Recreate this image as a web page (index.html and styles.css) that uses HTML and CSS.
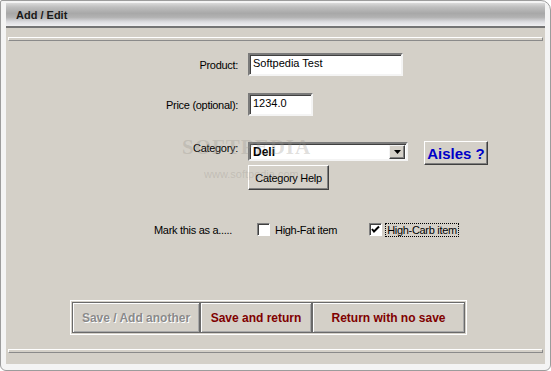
FILE: index.html
```html
<!DOCTYPE html>
<html lang="en">
<head>
  <meta charset="UTF-8">
  <title>Add / Edit</title>
  <link rel="stylesheet" href="styles.css">
</head>
<body>
  <div class="window">
    <div class="titlebar">Add / Edit</div>
    <div class="panel">
      <div class="groove"></div>

      <!-- Product name -->
      <div class="row row-product">
        <div class="lbl">Product:</div>
        <div class="field field-product">Softpedia Test</div>
      </div>

      <!-- Price -->
      <div class="row row-price">
        <div class="lbl">Price (optional):</div>
        <div class="field field-price">1234.0</div>
      </div>

      <!-- Category -->
      <div class="row row-category">
        <div class="lbl lbl-top">Category:</div>
        <div class="category-col">
          <div class="select">
            <span class="select-value">Deli</span>
            <span class="select-arrow">
              <svg width="7" height="4" viewBox="0 0 7 4"><polygon points="0,0 7,0 3.5,4" fill="#000"/></svg>
            </span>
          </div>
          <button type="button" class="btn btn-help">Category Help</button>
        </div>
        <button type="button" class="btn btn-aisles">Aisles ?</button>
      </div>

      <!-- Flags -->
      <div class="row row-mark">
        <div class="lbl lbl-mark">Mark this as a.....</div>
        <div class="check check-fat">
          <span class="box"></span>
          <span class="check-text">High-Fat item</span>
        </div>
        <div class="check check-carb">
          <span class="box">
            <svg width="9" height="9" viewBox="0 0 9 9"><polyline points="1,4 3,6.5 8,1.5" fill="none" stroke="#000" stroke-width="2"/></svg>
          </span>
          <span class="check-text focus">High-Carb item</span>
        </div>
      </div>

      <div class="btn-group">
        <button type="button" class="cmd cmd-add" disabled>Save / Add another</button>
        <button type="button" class="cmd cmd-save">Save and return</button>
        <button type="button" class="cmd cmd-return">Return with no save</button>
      </div>

      <div class="groove groove-bottom"></div>

      <!-- screenshot watermark -->
      <div class="watermark">
        <span class="wm-big">SOFTPEDIA</span>
        <span class="wm-small">www.softpedia.com</span>
      </div>
    </div>
  </div>
</body>
</html>
```

FILE: styles.css
```css
*, *::before, *::after {
  box-sizing: border-box;
}
body {
  margin: 0;
  background: #fff;
  font-family: "Liberation Sans", Arial, sans-serif;
  font-size: 11px;
  color: #000;
}
.window {
  width: 551px;
  height: 371px;
  border: 1px solid #9c9c9c;
  border-radius: 2px 10px 6px 6px;
  background: #f4f4f4;
  padding: 2px 5px 4px 5px;
  display: flex;
  flex-direction: column;
}
.titlebar {
  height: 25px;
  padding-left: 10px;
  line-height: 24px;
  font-weight: bold;
  color: #1a1a1a;
  border-bottom: 2px solid #747474;
  background: linear-gradient(#dadada 0%, #bebebe 18%, #a8a8a8 45%, #b2b2b2 62%, #dcdce0 82%, #f0f0f2 100%);
}
.panel {
  position: relative;
  height: 336px;
  background: #d4d0c8;
  overflow: hidden;
}
/* Etched separator lines */
.groove {
  height: 4px;
  margin: 9px 2px 0 2px;
  border: 1px solid;
  border-color: #fff #8a8a8a #8a8a8a #fff;
}
.groove-bottom {
  margin-top: 14px;
}
.row {
  display: flex;
  align-items: center;
}
.lbl {
  width: 242px;
  padding-right: 10px;
  text-align: right;
  letter-spacing: -0.3px;
}
.lbl-top {
  align-self: flex-start;
  line-height: 13px;
}
.lbl-mark {
  padding-right: 16px;
}
/* Sunken edit boxes */
.field {
  height: 23px;
  padding: 1px 3px 3px;
  background: #fff;
  border: 2px solid;
  border-color: #7a7a7a #f4f4f4 #f4f4f4 #7a7a7a;
  box-shadow: inset 1px 1px #404040;
  font-size: 11px;
  line-height: 15px;
}
.row-product {
  margin-top: 12px;
}
.field-product {
  width: 155px;
}
.row-price {
  margin-top: 17px;
}
.field-price {
  width: 65px;
}
.row-category {
  margin-top: 26px;
  align-items: flex-start;
}
.category-col {
  display: flex;
  flex-direction: column;
  align-items: flex-start;
}
.select {
  width: 160px;
  height: 19px;
  display: flex;
  align-items: center;
  justify-content: space-between;
  background: #fff;
  border: 2px solid;
  border-color: #7a7a7a #f4f4f4 #f4f4f4 #7a7a7a;
  box-shadow: inset 1px 1px #404040;
  padding: 0 1px 0 3px;
}
.select-value {
  font-weight: bold;
  font-size: 12px;
}
.select-arrow {
  width: 16px;
  height: 14px;
  display: flex;
  align-items: center;
  justify-content: center;
  background: #d4d0c8;
  border: 1px solid;
  border-color: #f4f4f4 #404040 #404040 #f4f4f4;
  box-shadow: inset -1px -1px #808080;
}
.btn {
  font-family: "Liberation Sans", Arial, sans-serif;
  background: #d4d0c8;
  border: 1px solid;
  border-color: #fff #404040 #404040 #fff;
  box-shadow: inset -1px -1px #808080;
  padding: 0;
  color: #000;
}
.btn-help {
  margin-top: 4px;
  width: 81px;
  height: 25px;
  font-size: 11px;
  letter-spacing: -0.3px;
}
.btn-aisles {
  margin: -1px 0 0 16px;
  width: 64px;
  height: 24px;
  font-size: 15px;
  font-weight: bold;
  color: #0000c8;
}
.row-mark {
  margin-top: 33px;
  height: 13px;
}
.check {
  display: flex;
  align-items: center;
}
.check-fat {
  margin-left: 9px;
}
.check-carb {
  margin-left: 31px;
}
.box {
  width: 13px;
  height: 13px;
  background: #fff;
  border: 1px solid;
  border-color: #808080 #fff #fff #808080;
  box-shadow: inset 1px 1px #404040;
  display: flex;
  align-items: center;
  justify-content: center;
}
.check-text {
  margin-left: 4px;
  letter-spacing: -0.3px;
  padding: 0 1px;
}
.focus {
  outline: 1px dotted #000;
}
/* Bottom command buttons */
.btn-group {
  display: flex;
  margin: 64px 0 0 64px;
  width: 397px;
  height: 35px;
  border: 1px solid #fff;
  padding: 1px;
}
.cmd {
  height: 31px;
  background: #d4d0c8;
  border: 1px solid #6a6a6a;
  box-shadow: inset 1px 1px #fff, inset -1px -1px #a8a8a8;
  font-family: "Liberation Sans", Arial, sans-serif;
  font-size: 12px;
  font-weight: bold;
  color: #800000;
  padding: 0;
}
.cmd-add {
  width: 128px;
  color: #8a8a8a;
  text-shadow: 1px 1px #fff;
}
.cmd-save {
  width: 112px;
}
.cmd-return {
  width: 153px;
}
/* faint overlay, drawn over the form like the screenshot's stamp */
.watermark {
  position: absolute;
  left: 176px;
  top: 107px;
  display: flex;
  flex-direction: column;
  pointer-events: none;
  color: rgba(150, 146, 138, 0.3);
}
.wm-big {
  font-family: "Liberation Serif", serif;
  font-size: 21px;
  font-weight: bold;
  letter-spacing: 1px;
}
.wm-small {
  margin: 8px 0 0 22px;
  font-size: 11px;
}
```
